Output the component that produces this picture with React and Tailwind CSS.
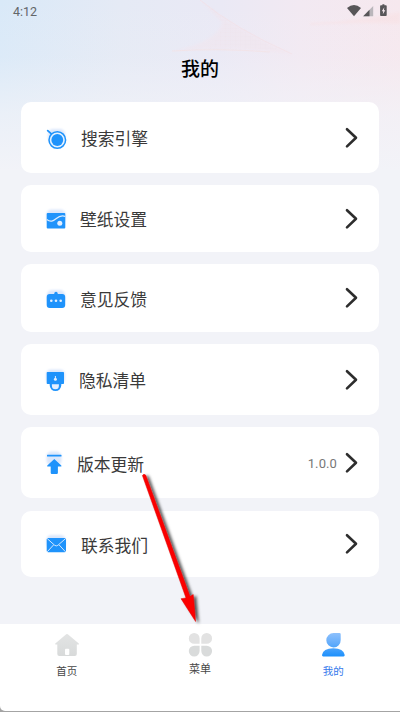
import React from "react";

const BLUE = "#1f93fb";

function Halo({ x, y, w = 20 }) {
  return <rect x={x} y={y} width={w} height="14" rx="5" fill="#dbe7fb" filter="url(#soft)" />;
}

function SearchIcon() {
  return (
    <>
      <Halo x={48} y={129} w={17} />
      <path d="M47.700 130.700l4.500 4" stroke={BLUE} strokeWidth="1.800" strokeLinecap="round" />
      <circle cx="57.300" cy="140" r="8.300" fill="#e6f2ff" stroke={BLUE} strokeWidth="1.500" />
      <circle cx="57.300" cy="140" r="5.900" fill={BLUE} />
    </>
  );
}

function WallpaperIcon() {
  return (
    <>
      <Halo x={46.5} y={209.5} w={19} />
      <rect x="46.700" y="213" width="18.600" height="15.600" rx="1" fill={BLUE} />
      <path d="M46.700 219.500c4 3 6.500 1.500 9.300-.8 3-2.500 6-3.500 9.300-2.200" fill="none" stroke="#dcecff" strokeWidth="1.200" />
      <circle cx="59.800" cy="223.300" r="2.500" fill="#e3efff" />
    </>
  );
}

function FeedbackIcon() {
  return (
    <>
      <Halo x={47} y={290} w={18} />
      <circle cx="56" cy="293.500" r="1.700" fill={BLUE} />
      <rect x="46.700" y="294" width="18.500" height="14" rx="3" fill={BLUE} />
      <circle cx="51.300" cy="300.700" r="1.300" fill="#e3efff" />
      <circle cx="56" cy="300.700" r="1.300" fill="#e3efff" />
      <circle cx="60.700" cy="300.700" r="1.300" fill="#e3efff" />
    </>
  );
}

function PrivacyIcon() {
  return (
    <>
      <Halo x={46} y={369.5} w={19} />
      <path d="M47.500 372h15.700a.8.800 0 0 1 .8.800v10.400a.8.800 0 0 1-.8.800H61.300v1.300a5.800 5.800 0 0 1-11.600 0V384h-2.200a.8.800 0 0 1-.8-.8v-10.400a.8.800 0 0 1 .8-.8z" fill={BLUE} />
      <path d="M51.900 384.300h7v1.400a3.500 3.500 0 0 1-7 0z" fill="#e3efff" />
      <path d="M55.400 376v2.500" stroke="#e3efff" strokeWidth="1" />
      <circle cx="55.400" cy="379.300" r="1.500" fill="#e3efff" />
    </>
  );
}

function UpdateIcon() {
  return (
    <>
      <Halo x={46.5} y={451.500} w={15} />
      <rect x="47" y="454.700" width="14.500" height="1.900" rx=".5" fill={BLUE} />
      <path d="M54.300 459l7 6.600q.7.900-.4.900h-3v6.300q0 1.200-1.200 1.200h-4.800q-1.200 0-1.200-1.200v-6.300h-3q-1.100 0-.4-.9z" fill={BLUE} />
    </>
  );
}

function ContactIcon() {
  return (
    <>
      <Halo x={46.5} y={535} w={19} />
      <rect x="46.700" y="538" width="19.300" height="14.200" rx="1.500" fill={BLUE} />
      <path d="M47.200 538.600l7.500 6.700q1.600 1.200 3.200 0l7.600-6.700M47.200 551.800l6.300-6.800M65.500 551.800l-6.300-6.800" fill="none" stroke="#d4e8ff" strokeWidth="1" />
    </>
  );
}

const items = [
  { label: "搜索引擎", Icon: SearchIcon, top: 102, height: 71, box: "h-[71px]", text: "pl-[10px] pt-px" },
  { label: "壁纸设置", Icon: WallpaperIcon, top: 185, height: 67, box: "mt-3 h-[67px]", text: "pl-[9px] pt-px" },
  { label: "意见反馈", Icon: FeedbackIcon, top: 264, height: 68, box: "mt-3 h-[68px]", text: "pl-[9px] pt-[2px]" },
  { label: "隐私清单", Icon: PrivacyIcon, top: 344, height: 71, box: "mt-3 h-[71px]", text: "pl-2 pt-px" },
  { label: "版本更新", Icon: UpdateIcon, top: 427, height: 71, box: "mt-3 h-[71px]", text: "pl-[6px] pt-[3px]", value: "1.0.0" },
  { label: "联系我们", Icon: ContactIcon, top: 511, height: 66, box: "mt-[13px] h-[66px]", text: "pl-[10px] pt-px" },
];

function MenuRow({ item }) {
  const { label, Icon, top, height, box, text, value } = item;
  return (
    <div className={`flex items-center rounded-[10px] bg-white pl-[22px] pr-[18px] ${box}`}>
      <svg width="28" height={height} viewBox={`43 ${top} 28 ${height}`} className="shrink-0">
        <Icon />
      </svg>
      <span className={`grow text-[16.8px] leading-5 text-[#3a3a3a] ${text}`}>{label}</span>
      {value && <span className="mr-[5px] pt-[2px] font-[Roboto] text-[13px] leading-4 tracking-[0.1px] text-[#777]">{value}</span>}
      <svg width="19" height="24" viewBox="0 0 19 24" fill="none" className="shrink-0">
        <path d="M5 3.200l9 8.600L5 20.400" stroke="#2d2d2d" strokeWidth="2.600" strokeLinecap="round" strokeLinejoin="round" />
      </svg>
    </div>
  );
}

function Backdrop() {
  return (
    <svg width="400" height="190" viewBox="0 0 400 190" className="absolute left-0 top-0">
      <defs>
        <filter id="soft" x="-30%" y="-40%" width="160%" height="180%">
          <feGaussianBlur stdDeviation="1.300" />
        </filter>
        <linearGradient id="sky">
          <stop offset="0" stopColor="#d9e9f8" />
          <stop offset=".3" stopColor="#e5eaf5" />
          <stop offset=".55" stopColor="#eae9f5" />
          <stop offset=".75" stopColor="#f2e9f2" />
          <stop offset="1" stopColor="#f6e8ee" />
        </linearGradient>
        <linearGradient id="fade" x2="0" y2="1">
          <stop offset="0" stopColor="#f2f3f8" stopOpacity="0" />
          <stop offset=".3" stopColor="#f2f3f8" stopOpacity=".12" />
          <stop offset=".6" stopColor="#f2f3f8" stopOpacity=".7" />
          <stop offset=".9" stopColor="#f2f3f8" />
        </linearGradient>
        <pattern id="weave" width="5" height="4" patternUnits="userSpaceOnUse">
          <path d="M0 0h5M0 0v4" stroke="#ecdfe8" strokeWidth=".5" />
        </pattern>
      </defs>
      <rect width="400" height="190" fill="url(#sky)" />
      <path d="M200 0Q235 29 292 54Q245 47 172 51Q218 42 222 22Z" fill="#f3e3eb" opacity=".45" filter="url(#soft)" />
      <path d="M202 3Q235 29 280 50Q245 47 205 49Q222 38 222 22Z" fill="url(#weave)" opacity=".6" />
      <path d="M200 0Q235 29 292 54" fill="none" stroke="#f3dde3" strokeWidth="1" opacity=".6" />
      <path d="M172 51Q220 48 270 52" fill="none" stroke="#f4dfe1" strokeWidth="1" opacity=".7" />
      <path d="M310 23Q360 21 400 12V24Q355 22 310 25Z" fill="#f9dedf" opacity=".4" filter="url(#soft)" />
      <rect width="400" height="190" fill="url(#fade)" />
    </svg>
  );
}

function StatusIcons() {
  return (
    <svg width="44" height="14" viewBox="345 4 44 14">
      <path d="M347 8q7-5.800 14 0l-7 8.200z" fill="#575558" />
      <path d="M373.200 6v10.200h-10z" fill="#bab6bb" />
      <path d="M369.500 9.800v6.400h-6.300z" fill="#575558" />
      <path d="M381 5.300h1.400V4.300h2v1h1.500q.8 0 .8.800v9.200q0 .8-.8.800h-5q-.8 0-.8-.8V6.100q0-.8.900-.8z" fill="#575558" />
      <path d="M384.300 7.300l-2.500 4h1.400l-.4 3 2.500-4h-1.400z" fill="#f5e8ee" />
    </svg>
  );
}

function HomeIcon() {
  return (
    <svg width="26" height="26" viewBox="54 632 26 26">
      <path d="M66.200 634.300q.8-.7 1.600 0l11 9.200q.7 1-.5 1.100h-1.500v9.400q0 2-2 2H59.300q-2 0-2-2v-9.400h-1.500q-1.200-.1-.5-1.100z" fill="url(#gray)" />
      <rect x="65" y="648.700" width="4.300" height="6.300" rx="1" fill="#fff" />
    </svg>
  );
}

function MenuIcon() {
  return (
    <svg width="26" height="26" viewBox="187 632 26 26">
      <defs>
        <linearGradient id="gray" x2="0" y2="1">
          <stop offset="0" stopColor="#e3e4e4" />
          <stop offset="1" stopColor="#d8dada" />
        </linearGradient>
      </defs>
      <path d="M194.200 633a5.400 5.400 0 0 1 5.400 5.400v5.400h-5.400a5.400 5.400 0 0 1 0-10.800z" fill="#e2e2e2" />
      <path d="M206.700 633a5.400 5.400 0 0 1 0 10.800h-5.400v-5.400a5.400 5.400 0 0 1 5.400-5.400z" fill="#e2e2e2" />
      <path d="M194.200 656.500a5.400 5.400 0 0 0 5.400-5.400v-5.400h-5.400a5.400 5.400 0 0 0 0 10.800z" fill="#d9dbdb" />
      <path d="M206.700 656.500a5.400 5.400 0 0 0 0-10.800h-5.400v5.400a5.400 5.400 0 0 0 5.400 5.400z" fill="#d9dbdb" />
    </svg>
  );
}

function ProfileIcon() {
  return (
    <svg width="26" height="26" viewBox="320 632 26 26">
      <defs>
        <linearGradient id="person" gradientUnits="userSpaceOnUse" x1="333" y1="633" x2="333" y2="657">
          <stop offset="0" stopColor="#8dc0fc" />
          <stop offset=".45" stopColor="#62acfb" />
          <stop offset="1" stopColor="#198ffc" />
        </linearGradient>
      </defs>
      <path d="M333.500 633h6q1.200 0 1.200 1.200v5.800a7.200 7.200 0 1 1-7.200-7z" fill="url(#person)" />
      <path d="M322 655q1-6.800 11.300-6.800T344.700 655q.1 1.400-1.200 1.400h-20.300q-1.300 0-1.200-1.400z" fill="url(#person)" />
    </svg>
  );
}

function NavItem({ label, children, className }) {
  return (
    <div className={`flex w-[134px] flex-col items-center pt-2 leading-3 ${className}`}>
      {children}
      <span>{label}</span>
    </div>
  );
}

function PointerArrow() {
  return (
    <svg width="80" height="170" viewBox="135 465 80 170" className="absolute left-[135px] top-[465px]">
      <defs>
        <filter id="shadow" x="-30%" y="-10%" width="170%" height="120%">
          <feDropShadow dx="3" dy="1.500" stdDeviation="1.700" floodColor="#000" floodOpacity=".65" />
        </filter>
      </defs>
      <path d="M142.400 475.500q1.400-2.200 3.400-.3L190 596.500l3.200-2L195.600 621.500L181 598.700l5-.7z" fill="#fb0000" stroke="#e00808" strokeWidth=".5" filter="url(#shadow)" />
    </svg>
  );
}

export default function App() {
  return (
    <div className="relative flex h-[712px] w-[400px] flex-col overflow-hidden bg-[#f2f3f8] font-['Noto_Sans_CJK_SC',sans-serif]">
      <Backdrop />
      <header className="relative h-[102px]">
        <div className="flex items-start justify-between pl-[13px] pr-[11px] pt-1">
          <span className="font-[Roboto] text-[12.5px] leading-4 text-[#626669]">4:12</span>
          <StatusIcons />
        </div>
        <h1 className="pt-[34px] text-center text-[19px] font-medium leading-7 text-black">我的</h1>
      </header>
      <main className="relative flex h-[522px] flex-col px-[21px]">
        {items.map((item) => (
          <MenuRow key={item.label} item={item} />
        ))}
      </main>
      <div className="relative h-[88px] bg-[#a4a4a4]">
        <nav className="flex h-[87px] justify-between rounded-bl-[5px] bg-white">
          <NavItem label="首页" className="gap-[7px] text-[10.5px] text-[#474747]">
            <HomeIcon />
          </NavItem>
          <NavItem label="菜单" className="gap-1 text-[11px] text-[#474747]">
            <MenuIcon />
          </NavItem>
          <NavItem label="我的" className="gap-[7px] text-[10.5px] text-[#3478ec]">
            <ProfileIcon />
          </NavItem>
        </nav>
      </div>
      <PointerArrow />
    </div>
  );
}
